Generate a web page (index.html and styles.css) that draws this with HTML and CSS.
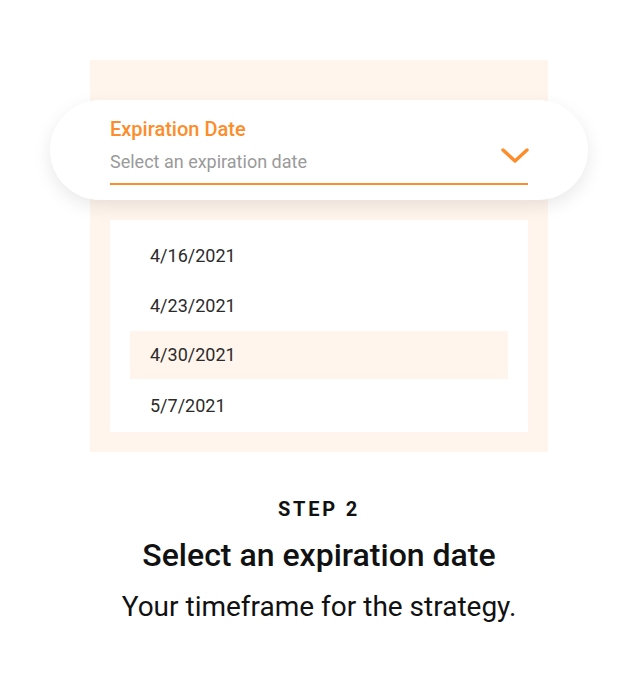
FILE: index.html
```html
<!DOCTYPE html>
<html>
<head>
<meta charset="utf-8">
<link rel="stylesheet" href="styles.css">
</head>
<body>
<main class="page">
  <section class="panel">
    <div class="select-card">
      <div class="label">Expiration Date</div>
      <div class="field">
        <span class="placeholder">Select an expiration date</span>
        <svg class="chevron" width="28" height="18" viewBox="0 0 28 18"><path d="M2 3 L14 14 L26 3" fill="none" stroke="#fd8c2a" stroke-width="3.4" stroke-linecap="round" stroke-linejoin="round"/></svg>
      </div>
    </div>
    <ul class="options">
      <li class="option">4/16/2021</li>
      <li class="option">4/23/2021</li>
      <li class="option selected">4/30/2021</li>
      <li class="option">5/7/2021</li>
    </ul>
  </section>
  <div class="step">STEP 2</div>
  <h1 class="title">Select an expiration date</h1>
  <p class="subtitle">Your timeframe for the strategy.</p>
</main>
</body>
</html>
```
FILE: styles.css
```css
html, body {
  margin: 0;
  padding: 0;
  background: #ffffff;
  font-family: Roboto, "Liberation Sans", sans-serif;
}
.page {
  display: flex;
  flex-direction: column;
  align-items: center;
  padding-top: 60px;
}
.panel {
  width: 458px;
  box-sizing: border-box;
  background: #fff5ec;
  padding: 40px 20px 20px;
  display: flex;
  flex-direction: column;
}
.select-card {
  margin: 0 -60px;
  height: 100px;
  box-sizing: border-box;
  background: #ffffff;
  border-radius: 50px;
  padding: 17px 60px 0;
  box-shadow: 0 6px 18px rgba(0, 0, 0, 0.09);
}
.label {
  color: #fd8c2a;
  font-size: 20px;
  line-height: 24px;
  font-weight: 500;
}
.field {
  display: flex;
  align-items: center;
  justify-content: space-between;
  margin-top: 9px;
  padding-bottom: 9px;
  border-bottom: 2px solid #fd8c2a;
}
.placeholder {
  color: #9a9a9a;
  font-size: 18px;
  line-height: 24px;
}
.chevron {
  margin-right: -1px;
  margin-top: -12px;
}
.options {
  list-style: none;
  margin: 20px 0 0;
  padding: 11px 20px 1px;
  background: #ffffff;
}
.option {
  height: 50px;
  line-height: 50px;
  padding-left: 20px;
  font-size: 18px;
  color: #2b2b2b;
}
.option.selected {
  background: #fff5ec;
  height: 48px;
  line-height: 48px;
  margin-bottom: 2px;
}
.step {
  margin-top: 46px;
  font-size: 20px;
  font-weight: 700;
  letter-spacing: 2.8px;
  color: #111111;
  line-height: 22px;
}
.title {
  margin: 16px 0 0;
  font-size: 32px;
  font-weight: 500;
  color: #111111;
  line-height: 38px;
}
.subtitle {
  margin: 16px 0 0;
  font-size: 28px;
  font-weight: 400;
  color: #111111;
  line-height: 34px;
}
```
